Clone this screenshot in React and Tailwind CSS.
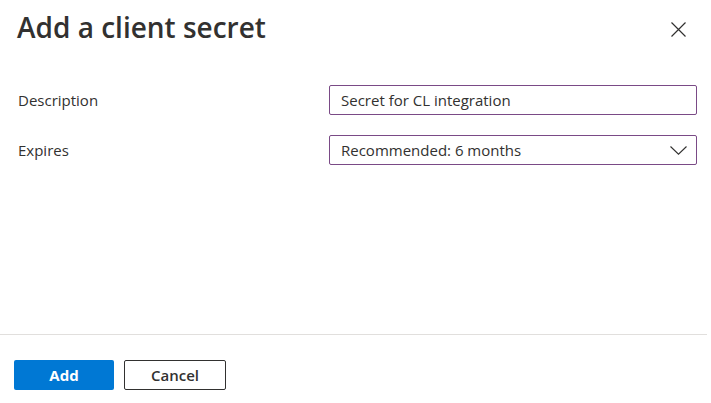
import React from 'react'

export default function App() {
  return (
    <div className="w-[711px] h-[403px] bg-white flex flex-col font-['Open_Sans',sans-serif] text-[#323130]">
      <div className="flex items-start justify-between pl-[17px] pr-[25px] pt-[8px]">
        <h1 className="text-[28px] font-semibold leading-[38px] text-[#323130]">Add a client secret</h1>
        <button className="mt-[14px] w-[15px] h-[15px] text-[#323130]">
          <svg viewBox="0 0 15 15" width="15" height="15" fill="none" stroke="currentColor" strokeWidth="1.2">
            <path d="M0.5 0.5 L14.5 14.5 M14.5 0.5 L0.5 14.5" />
          </svg>
        </button>
      </div>

      <div className="flex flex-col gap-[20px] mt-[39px] pl-[18px] pr-[14px]">
        <div className="flex items-center">
          <label className="w-[311px] text-[15px]">Description</label>
          <input
            defaultValue="Secret for CL integration"
            className="flex-1 h-[30px] border border-[#7a4a86] rounded-[2px] px-[11px] text-[15px] text-[#323130] outline-none"
          />
        </div>
        <div className="flex items-center">
          <label className="w-[311px] text-[15px]">Expires</label>
          <div className="flex-1 h-[30px] border border-[#7a4a86] rounded-[2px] pl-[11px] pr-[9px] flex items-center justify-between text-[15px]">
            <span>Recommended: 6 months</span>
            <svg viewBox="0 0 17 9" width="17" height="9" fill="none" stroke="#323130" strokeWidth="1.1">
              <path d="M0.5 0.5 L8.5 8.2 L16.5 0.5" />
            </svg>
          </div>
        </div>
      </div>

      <div className="flex-1" />

      <div className="border-t border-[#e1dfdd] mr-[4px]" />
      <div className="flex gap-[10px] pl-[14px] pt-[25px] pb-[13px]">
        <button className="w-[100px] h-[30px] bg-[#0078d4] text-white text-[15px] font-bold rounded-[2px]">Add</button>
        <button className="w-[102px] h-[30px] bg-white border border-[#323130] text-[#323130] text-[15px] font-semibold rounded-[2px]">Cancel</button>
      </div>
    </div>
  )
}
